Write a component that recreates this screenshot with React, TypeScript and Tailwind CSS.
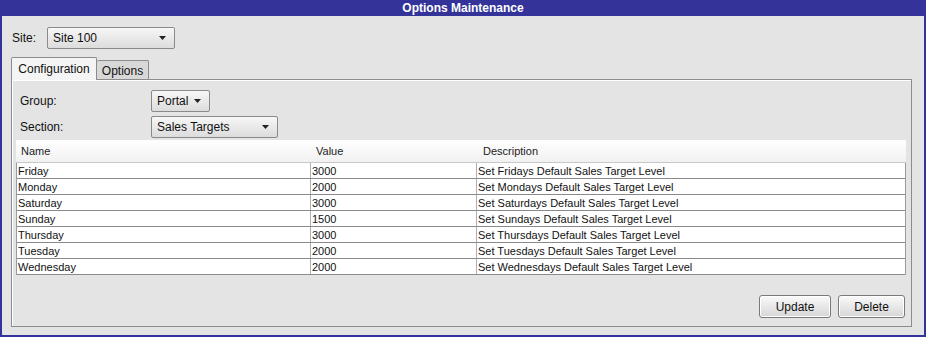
import { useState } from "react";

const ROWS = [
  { name: "Friday", value: "3000", desc: "Set Fridays Default Sales Target Level" },
  { name: "Monday", value: "2000", desc: "Set Mondays Default Sales Target Level" },
  { name: "Saturday", value: "3000", desc: "Set Saturdays Default Sales Target Level" },
  { name: "Sunday", value: "1500", desc: "Set Sundays Default Sales Target Level" },
  { name: "Thursday", value: "3000", desc: "Set Thursdays Default Sales Target Level" },
  { name: "Tuesday", value: "2000", desc: "Set Tuesdays Default Sales Target Level" },
  { name: "Wednesday", value: "2000", desc: "Set Wednesdays Default Sales Target Level" },
];

function Caret() {
  return (
    <svg width="7" height="4" viewBox="0 0 7 4" className="shrink-0">
      <path d="M0 0h7L3.5 4z" fill="#222" />
    </svg>
  );
}

function Combo({ label, width }: { label: string; width: string }) {
  return (
    <div
      className={`${width} h-[22px] flex items-center justify-between pl-[5px] pr-[8px] border border-[#8a8a8a] rounded-[2px] bg-gradient-to-b from-[#f7f7f7] to-[#dcdcdc] text-[12px] text-[#111]`}
    >
      <span>{label}</span>
      <Caret />
    </div>
  );
}

function Button({ children, width }: { children: string; width: string }) {
  return (
    <button
      className={`${width} h-[23px] border border-[#7a7a7a] rounded-[3px] bg-gradient-to-b from-[#fafafa] to-[#d6d6d6] text-[12px] text-[#111] shadow-[inset_0_0_0_1px_#fff]`}
    >
      {children}
    </button>
  );
}

export default function App() {
  const [tab, setTab] = useState<"config" | "options">("config");

  return (
    <div
      className="w-[926px] h-[337px] bg-[#333399] flex flex-col"
      style={{ fontFamily: "Arial, 'Liberation Sans', sans-serif" }}
    >
      <div className="h-[16px] flex items-center justify-center text-white font-bold text-[12px] leading-none">
        Options Maintenance
      </div>
      {/* body */}
      <div className="flex-1 mx-[2px] mb-[2px] bg-[#e4e4e4] flex flex-col pt-[11px] pl-[9px] pr-[12px]">
        <div className="flex items-center h-[22px]">
          <span className="text-[12px] text-[#111] pl-[1px] w-[36px]">Site:</span>
          <Combo label="Site 100" width="w-[128px]" />
        </div>

        {/* tabs */}
        <div className="flex items-end h-[22px] mt-[8px] relative z-10">
          <button
            onClick={() => setTab("config")}
            className={`h-[22px] w-[86px] border border-[#8c8c8c] border-b-0 text-[12px] text-[#111] rounded-t-[2px] ${
              tab === "config" ? "bg-[#f4f4f4] h-[23px] -mb-[1px]" : "bg-[#d8d8d8] h-[19px]"
            }`}
          >
            Configuration
          </button>
          <button
            onClick={() => setTab("options")}
            className={`w-[52px] border border-[#8c8c8c] border-b-0 border-l-0 text-[12px] text-[#111] rounded-t-[2px] pt-[1px] ${
              tab === "options" ? "bg-[#f4f4f4] h-[23px] -mb-[1px]" : "bg-[#d8d8d8] h-[19px]"
            }`}
          >
            Options
          </button>
        </div>

        {/* panel */}
        <div className="h-[248px] border border-[#8c8c8c] shadow-[inset_1px_1px_0_#fff] flex flex-col pl-[4px] pr-[5px] pt-[10px]">
          <div className="flex items-center h-[22px]">
            <span className="text-[12px] text-[#111] w-[135px] pl-[4px]">Group:</span>
            <Combo label="Portal" width="w-[59px]" />
          </div>
          <div className="flex items-center h-[22px] mt-[4px]">
            <span className="text-[12px] text-[#111] w-[135px] pl-[4px]">Section:</span>
            <Combo label="Sales Targets" width="w-[127px]" />
          </div>

          {/* table */}
          <div className="mt-[2px] w-[890px]">
            <div className="flex h-[23px] bg-gradient-to-b from-white to-[#f1f1f1] border-b border-[#c8c8c8] text-[11px] text-[#222]">
              <div className="w-[295px] pl-[5px] flex items-center">Name</div>
              <div className="w-[166px] pl-[5px] flex items-center">Value</div>
              <div className="flex-1 pl-[6px] flex items-center">Description</div>
            </div>
            <div
              className="bg-white border-l border-r border-[#9a9a9a] text-[11px] text-[#111]"
              style={{ fontFamily: "Tahoma, 'Liberation Sans', sans-serif" }}
            >
              {ROWS.map((r) => (
                <div key={r.name} className="flex h-[16px] border-b border-[#8a8a8a] leading-[16px]">
                  <div className="w-[294px] border-r border-[#b0b0b0] pl-[1px] truncate">{r.name}</div>
                  <div className="w-[166px] border-r border-[#b0b0b0] pl-[1px]">{r.value}</div>
                  <div className="flex-1 pl-[1px]">{r.desc}</div>
                </div>
              ))}
            </div>
          </div>

          <div className="flex-1" />
          <div className="flex justify-end gap-[7px] mb-[8px] pr-[1px]">
            <Button width="w-[72px]">Update</Button>
            <Button width="w-[67px]">Delete</Button>
          </div>
        </div>
      </div>
    </div>
  );
}
